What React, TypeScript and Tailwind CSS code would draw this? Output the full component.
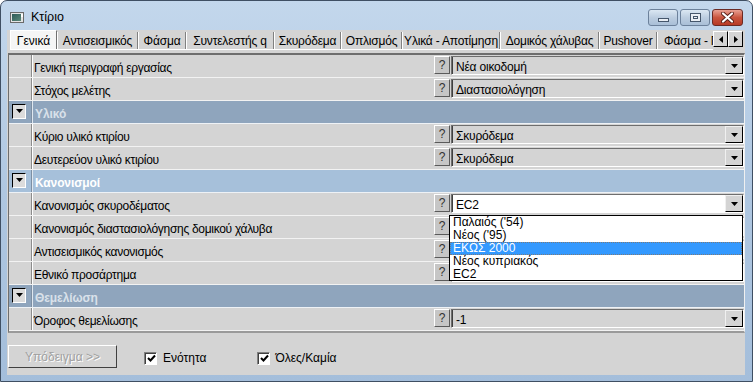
import React from 'react';

type Row =
  | { kind: 'item'; label: string; value: string; active?: boolean }
  | { kind: 'header'; label: string; tone: 'dark' | 'light' };

const rows: Row[] = [
  { kind: 'item', label: 'Γενική περιγραφή εργασίας', value: 'Νέα οικοδομή' },
  { kind: 'item', label: 'Στόχος μελέτης', value: 'Διαστασιολόγηση' },
  { kind: 'header', label: 'Υλικό', tone: 'dark' },
  { kind: 'item', label: 'Κύριο υλικό κτιρίου', value: 'Σκυρόδεμα' },
  { kind: 'item', label: 'Δευτερεύον υλικό κτιρίου', value: 'Σκυρόδεμα' },
  { kind: 'header', label: 'Κανονισμοί', tone: 'light' },
  { kind: 'item', label: 'Κανονισμός σκυροδέματος', value: 'EC2', active: true },
  { kind: 'item', label: 'Κανονισμός διαστασιολόγησης δομικού χάλυβα', value: '' },
  { kind: 'item', label: 'Αντισεισμικός κανονισμός', value: '' },
  { kind: 'item', label: 'Εθνικό προσάρτημα', value: '' },
  { kind: 'header', label: 'Θεμελίωση', tone: 'dark' },
  { kind: 'item', label: 'Όροφος θεμελίωσης', value: '-1' },
];

const tabs: { label: string; w: string }[] = [
  { label: 'Αντισεισμικός', w: 'w-[81px]' },
  { label: 'Φάσμα', w: 'w-[48px]' },
  { label: 'Συντελεστής q', w: 'w-[88px]' },
  { label: 'Σκυρόδεμα', w: 'w-[67px]' },
  { label: 'Οπλισμός', w: 'w-[61px]' },
  { label: 'Υλικά - Αποτίμηση', w: 'w-[98px]' },
  { label: 'Δομικός χάλυβας', w: 'w-[99px]' },
  { label: 'Pushover', w: 'w-[58px]' },
];

function Tri() {
  return (
    <svg width="7" height="4" viewBox="0 0 7 4">
      <polygon points="0,0 7,0 3.5,4" fill="#000" />
    </svg>
  );
}

function QBtn() {
  return (
    <div className="w-[16px] h-[18px] bg-[#c6c6c6] border-t border-l border-t-white border-l-white border-r border-b border-r-[#5a5a5a] border-b-[#5a5a5a] flex items-center justify-center text-[12px] leading-none text-[#333]">
      ?
    </div>
  );
}

function DropBtn() {
  return (
    <div className="w-[18px] h-[17px] bg-[#d4d4d4] border-t border-l border-t-[#f0f0f0] border-l-[#f0f0f0] border-r border-b border-r-black border-b-black flex items-center justify-center">
      <Tri />
    </div>
  );
}

function Field({ value, active }: { value: string; active?: boolean }) {
  return (
    <div
      className={`w-[293px] h-[19px] border-t border-l border-t-[#6e6e6e] border-l-[#6e6e6e] border-r border-b border-r-white border-b-white flex items-start ${
        active ? 'bg-white' : 'bg-[#d4d4d4]'
      }`}
    >
      <div className="flex-1 h-full border-l border-l-[#404040] pl-[3px] pt-[4px] text-[12px] leading-none tracking-[-0.2px] whitespace-nowrap">
        {value}
      </div>
      <DropBtn />
    </div>
  );
}

function HeaderBox() {
  return (
    <div className="w-[14px] h-[15px] ml-[3px] mt-[3px] bg-[#dcdcdc] border-t border-l border-t-black border-l-black border-r border-b border-r-white border-b-white flex justify-center pt-[4px]">
      <Tri />
    </div>
  );
}

function GridRow({ row }: { row: Row }) {
  if (row.kind === 'header') {
    const bg = row.tone === 'light' ? 'bg-[#a6c0da]' : 'bg-[#8fa5bd]';
    const tc = row.tone === 'light' ? 'text-white' : 'text-[#d9e1ea]';
    return (
      <div className={`h-[23px] flex border-b border-b-[#eef2f6] ${bg}`}>
        <div className="w-[23px] h-full border-r border-r-[#7d8fa3]">
          <HeaderBox />
        </div>
        <div className={`flex-1 h-full border-l border-l-[#dfe7ef] pl-[2px] pt-[7px] text-[12px] leading-none font-bold tracking-[-0.1px] ${tc}`}>
          {row.label}
        </div>
      </div>
    );
  }
  return (
    <div className="h-[23px] flex border-b border-b-[#f2f2f2] bg-[#d4d4d4]">
      <div className="w-[23px] h-full border-r border-r-[#8c8c8c]" />
      <div className="flex-1 h-full border-l border-l-white pl-[1px] pt-[7px] text-[12px] leading-none tracking-[-0.3px] text-black whitespace-nowrap">
        {row.label}
      </div>
      <div className="flex items-start pt-[1px] gap-[1px]">
        <QBtn />
        <Field value={row.value} active={row.active} />
      </div>
    </div>
  );
}

function Check() {
  return (
    <div className="w-[13px] h-[13px] bg-white border-t border-l border-t-[#808080] border-l-[#808080] border-r border-b border-r-white border-b-white">
      <div className="w-full h-full border-t border-l border-t-[#404040] border-l-[#404040] flex items-center justify-center">
        <svg width="9" height="9" viewBox="0 0 9 9">
          <polyline points="1,4 3.5,6.5 8,1.5" fill="none" stroke="#000" strokeWidth="2" />
        </svg>
      </div>
    </div>
  );
}

function CapBtn({ kind }: { kind: 'min' | 'max' | 'close' }) {
  if (kind === 'close') {
    return (
      <div className="w-[31px] h-[17px] rounded-[3px] border border-[#6b2a24] bg-gradient-to-b from-[#e8a093] via-[#c9553f] to-[#b73a26] flex items-center justify-center">
        <svg width="13" height="11" viewBox="0 0 13 11">
          <path d="M2 1.5 L11 9.5 M11 1.5 L2 9.5" stroke="#5a2018" strokeWidth="4" strokeLinecap="round" />
          <path d="M2 1.5 L11 9.5 M11 1.5 L2 9.5" stroke="#ffffff" strokeWidth="2.2" strokeLinecap="round" />
        </svg>
      </div>
    );
  }
  return (
    <div className="w-[30px] h-[17px] rounded-[3px] border border-[#6c819b] bg-gradient-to-b from-[#dbe7f3] via-[#bccde0] to-[#a9bfd7] flex items-center justify-center">
      {kind === 'min' ? (
        <div className="w-[11px] h-[4px] mt-[5px] bg-[#e9eef4] border border-[#45566b]" />
      ) : (
        <div className="w-[11px] h-[9px] border border-[#45566b] bg-[#e9eef4] flex items-center justify-center">
          <div className="w-[5px] h-[3px] border border-[#45566b]" />
        </div>
      )}
    </div>
  );
}

export default function App() {
  return (
    <div className="relative w-[753px] h-[382px] bg-white font-['Liberation_Sans',Arial,sans-serif] text-black overflow-hidden">
      <div className="w-[753px] h-[382px] flex flex-col rounded-t-[7px] border border-[#3f4f63] bg-gradient-to-b from-[#c3d7ec] via-[#afc7e1] to-[#a4bedb]">
        {/* Title bar */}
        <div className="h-[29px] shrink-0 flex items-center pt-[3px]">
          <div className="ml-[9px] w-[14px] h-[11px] bg-[#e4e4e4] border border-[#6a6a6a] flex">
            <div className="w-[9px] h-[7px] mt-[1px] ml-[1px] bg-gradient-to-br from-[#2e5a58] to-[#5b8a7a]" />
            <div className="w-[2px] h-[3px] mt-[1px] bg-white" />
          </div>
          <span className="ml-[7px] text-[12.5px] text-black">Κτίριο</span>
          <div className="ml-auto mr-[9px] flex gap-[2px]">
            <CapBtn kind="min" />
            <CapBtn kind="max" />
            <CapBtn kind="close" />
          </div>
        </div>

        {/* Client */}
        <div className="ml-[6px] w-[738px] h-[345px] shrink-0 bg-[#d4d4d4] flex flex-col">
          {/* Tab strip */}
          <div className="h-[20px] shrink-0 flex items-stretch pl-[3px] pr-[2px]">
            <div className="flex-1 flex items-stretch overflow-hidden border-b border-b-white">
              <div className="w-[47px] shrink-0 bg-[#f5f5f5] border-t border-l border-t-white border-l-white border-r border-r-[#707070] flex items-center justify-center text-[12px] pt-[1px]">
                Γενικά
              </div>
              {tabs.map((t) => (
                <div
                  key={t.label}
                  className={`${t.w} shrink-0 mt-[2px] border-l border-l-white border-r border-r-[#808080] flex items-center justify-center text-[12px] tracking-[-0.2px] whitespace-nowrap`}
                >
                  {t.label}
                </div>
              ))}
              <div className="flex-1 min-w-0 mt-[2px] border-l border-l-white flex items-center pl-[6px] text-[12px] tracking-[-0.2px] whitespace-nowrap overflow-hidden">
                Φάσμα - Π
              </div>
            </div>
            <div className="flex items-start pt-[1px]">
              <div className="w-[15px] h-[16px] bg-[#d4d4d4] border-t border-l border-t-white border-l-white border-r border-b border-r-black border-b-black flex items-center justify-center">
                <svg width="4" height="7" viewBox="0 0 4 7">
                  <polygon points="4,0 4,7 0,3.5" fill="#000" />
                </svg>
              </div>
              <div className="w-[15px] h-[16px] bg-[#d4d4d4] border-t border-l border-t-white border-l-white border-r border-b border-r-black border-b-black flex items-center justify-center">
                <svg width="4" height="7" viewBox="0 0 4 7">
                  <polygon points="0,0 0,7 4,3.5" fill="#000" />
                </svg>
              </div>
            </div>
          </div>

          {/* Grid */}
          <div className="ml-[1px] mt-[3px] w-[737px] h-[280px] shrink-0 border-t-2 border-b-2 border-l border-r border-t-[#6e6e6e] border-l-[#6e6e6e] border-b-[#9a9a9a] border-r-[#f0f0f0] flex flex-col overflow-hidden">
            {rows.map((r, i) => (
              <GridRow key={i} row={r} />
            ))}
          </div>

          {/* Bottom bar */}
          <div className="flex-1 flex items-start pt-[12px] pl-[1px]">
            <div className="w-[109px] h-[23px] bg-[#d4d4d4] border-t border-l border-t-white border-l-white border-r border-b border-r-[#404040] border-b-[#404040] flex items-center justify-center text-[12px] text-[#a0a0a0] [text-shadow:1px_1px_0_#ffffff]">
              Υπόδειγμα &gt;&gt;
            </div>
            <div className="ml-[27px] mt-[4px] flex items-center">
              <Check />
              <span className="ml-[6px] text-[12px]">Ενότητα</span>
            </div>
            <div className="ml-[51px] mt-[4px] flex items-center">
              <Check />
              <span className="ml-[5px] text-[12px]">Όλες/Καμία</span>
            </div>
          </div>
        </div>
      </div>

      {/* Open dropdown list */}
      <div className="absolute left-[449px] top-[215px] w-[294px] h-[66px] bg-white border border-black text-[12px] leading-[13px]">
        <div className="h-[13px] pl-[3px]">Παλαιός ('54)</div>
        <div className="h-[13px] pl-[3px]">Νέος ('95)</div>
        <div className="h-[13px] bg-[#3399ff] text-white border border-dotted border-[#7a7a7a] leading-[11px] pl-[2px]">ΕΚΩΣ 2000</div>
        <div className="h-[13px] pl-[3px]">Νέος κυπριακός</div>
        <div className="h-[13px] pl-[3px]">EC2</div>
      </div>
    </div>
  );
}
